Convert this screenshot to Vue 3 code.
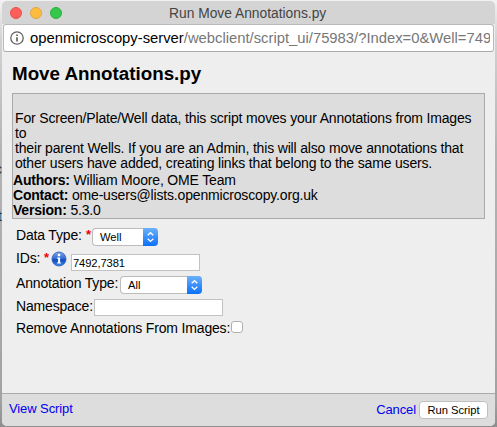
<script setup>
import { ref } from 'vue'

const dataType = ref('Well')
const ids = ref('7492,7381')
const annotationType = ref('All')
const namespace = ref('')
const removeAnns = ref(false)
</script>

<template>
  <div class="desktop">
    <span class="behind b1">c</span>
    <span class="behind b2">t</span>
    <div class="window">
      <header class="titlebar">
        <span class="lights"><i class="red"></i><i class="amber"></i><i class="green"></i></span>
        <span class="caption">Run Move Annotations.py</span>
      </header>
      <div class="address">
        <svg class="site" width="14" height="14" viewBox="0 0 14 14">
          <circle cx="7" cy="7" r="6.2" fill="none" stroke="#606060" stroke-width="1.3" />
          <path d="M7 6.2V10.4M7 3.4V5" stroke="#555" stroke-width="1.6" />
        </svg>
        <span class="url"><b>openmicroscopy-server</b>/webclient/script_ui/75983/?Index=0&amp;Well=749</span>
      </div>
      <main class="content">
        <h1>Move Annotations.py</h1>
        <section class="info">
          <p class="desc">For Screen/Plate/Well data, this script moves your Annotations from Images<br>to<br>their parent Wells. If you are an Admin, this will also move annotations that<br>other users have added, creating links that belong to the same users.</p>
          <p><b>Authors:</b> William Moore, OME Team</p>
          <p><b>Contact:</b> ome-users@lists.openmicroscopy.org.uk</p>
          <p><b>Version:</b> 5.3.0</p>
        </section>
        <form class="form" @submit.prevent>
          <div class="row r1">
            <label>Data Type:</label><span class="req">*</span>
            <div class="select well"><span>{{ dataType }}</span><em><svg width="15" height="18" viewBox="0 0 15 18"><path d="M4.7 7.3L7.5 4.7L10.3 7.3M4.7 10.8L7.5 13.4L10.3 10.8" /></svg></em></div>
          </div>
          <div class="row r2">
            <label>IDs:</label><span class="req">*</span>
            <svg class="help" width="16" height="16" viewBox="0 0 16 16">
              <defs>
                <linearGradient id="blue" x1="0" y1="0" x2="0" y2="1">
                  <stop offset="0" stop-color="#7fa9ea" /><stop offset=".48" stop-color="#2f68d0" />
                  <stop offset=".55" stop-color="#1149b7" /><stop offset="1" stop-color="#3c8be9" />
                </linearGradient>
              </defs>
              <circle cx="8" cy="8" r="7" fill="url(#blue)" stroke="#2a58b4" stroke-width=".8" />
              <circle cx="8" cy="4.1" r="1.3" fill="#fff" />
              <path d="M6.1 6.6H9.1V11.5H10.1V12.6H6V11.5H7.1V7.7H6.1Z" fill="#fff" />
            </svg>
            <input v-model="ids" class="text" type="text">
          </div>
          <div class="row r3">
            <label>Annotation Type:</label>
            <div class="select all"><span>{{ annotationType }}</span><em><svg width="15" height="18" viewBox="0 0 15 18"><path d="M4.7 7.3L7.5 4.7L10.3 7.3M4.7 10.8L7.5 13.4L10.3 10.8" /></svg></em></div>
          </div>
          <div class="row r4">
            <label>Namespace:</label>
            <input v-model="namespace" class="text" type="text">
          </div>
          <div class="row r5">
            <label>Remove Annotations From Images:</label>
            <input v-model="removeAnns" class="check" type="checkbox">
          </div>
        </form>
      </main>
      <footer class="footer">
        <a class="view">View Script</a>
        <a class="cancel">Cancel</a>
        <button type="button">Run Script</button>
      </footer>
    </div>
  </div>
</template>

<style>
body { margin: 0; }
</style>

<style scoped>
* { box-sizing: border-box; }
.desktop {
  position: relative;
  width: 497px;
  height: 427px;
  padding: 1px 2px 1px 2px;
  overflow: hidden;
  background: linear-gradient(#f2f2f2 0, #d2d2d2 40px, #b4b4b4 150px, #a2a2a2 400px, #8e8e8e 100%);
  font-family: "Liberation Sans", Arial, sans-serif;
  font-size: 14px;
  letter-spacing: -0.17px;
  color: #000;
  white-space: nowrap;
}
.behind { position: absolute; font-size: 14px; line-height: 16px; color: #333; }
.b1 { top: 161px; left: -5px; }
.b2 { top: 208px; left: -2px; }
.window {
  position: relative;
  display: flex;
  flex-direction: column;
  width: 493px;
  height: 425px;
  border-radius: 5px;
  overflow: hidden;
  background: #eee;
}
.titlebar {
  display: flex;
  align-items: center;
  flex: none;
  height: 23px;
  padding-left: 8px;
  background: #d4d4d4;
}
.lights { display: flex; gap: 8px; padding-top: 1px; }
.lights i { width: 12px; height: 12px; border-radius: 50%; border: 1px solid; }
.lights .red { background: #fe5f5b; border-color: #e9504c; }
.lights .amber { background: #fdbc40; border-color: #e3a53a; }
.lights .green { background: #34c84a; border-color: #2bb03c; }
.caption { margin-left: 107px; padding-top: 2px; font-size: 13.8px; letter-spacing: 0; line-height: 16px; color: #444; }
.address {
  display: flex;
  align-items: center;
  flex: none;
  height: 28px;
  margin: 0 1px;
  padding: 0 3px 0 6px;
  background: #fff;
  border: 1px solid #b9b9b9;
  border-bottom-color: #aaa;
  border-radius: 3px;
}
.site { flex: none; margin-right: 6px; }
.url { flex: 1; min-width: 0; overflow: hidden; font-size: 14.8px; letter-spacing: 0; line-height: 18px; color: #777; }
.url b { font-weight: normal; color: #000; }
.content { flex: 1; padding: 11px 10px 0; }
h1 { margin: 0 0 9px; font-size: 18.8px; letter-spacing: 0; line-height: 21px; }
.info {
  width: 473px;
  height: 126px;
  padding: 17px 0 0;
  background: #ddd;
  border: 1px solid #a9a9a9;
}
.info p { margin: 0; line-height: 15px; }
.info .desc { padding: 0 0 2px 2px; }
.info b { letter-spacing: -0.2px; }
.form { padding-left: 4px; }
.row { display: flex; align-items: flex-start; }
label { flex: none; margin-top: -1px; line-height: 16px; }
.req { flex: none; width: 5px; color: #f00000; font-weight: bold; line-height: 16px; font-size: 13px; }
.r1 { height: 23px; padding-top: 9px; }
.r1 label { width: 66px; }
.r1 .req { margin: -1px 1px 0 4px; }
.r2 { height: 24px; padding-top: 9px; }
.r2 label { width: 24px; }
.r2 .req { margin: -1px 3px 0 4px; }
.r3 { height: 24px; padding-top: 10px; }
.r3 label { width: 104px; }
.r4 { height: 22px; padding-top: 9px; }
.r4 label { width: 78px; }
.r5 { padding-top: 9px; }
.r5 label { width: 214px; }
.select {
  display: flex;
  justify-content: space-between;
  align-items: center;
  flex: none;
  height: 18px;
  padding-left: 7px;
  background: #fff;
  border: 1px solid #bcbcbc;
  border-right: 0;
  border-radius: 4px;
  font-size: 11.2px;
  letter-spacing: 0;
}
.select em { width: 15px; height: 18px; border-radius: 0 4px 4px 0; background: linear-gradient(#6bb1fa, #0b70fb); }
.select svg { display: block; }
.select path { fill: none; stroke: #fff; stroke-width: 1.4; }
.well { width: 66px; }
.all { width: 82px; }
.help { flex: none; margin: 0 0 0 -1px; }
.text {
  flex: none;
  width: 129px;
  height: 17px;
  margin: 0;
  padding: 0 1px;
  border: 1px solid #c2c2c2;
  border-radius: 0;
  background: #fff;
  font: 11.2px "Liberation Sans", Arial, sans-serif;
  letter-spacing: -0.1px;
  color: #000;
}
.r2 .text { margin: 3px 0 0 4px; }
.check {
  appearance: none;
  width: 12px;
  height: 12px;
  margin: 0 0 0 1px;
  border: 1px solid #b0b0b0;
  border-radius: 3px;
  background: #fff;
}
.footer {
  display: flex;
  align-items: flex-start;
  flex: none;
  height: 33px;
  padding: 7px 7px 0 7px;
  background: #ddd;
  border-top: 1px solid #aaa;
}
.footer a { font-size: 13px; letter-spacing: -0.1px; line-height: 16px; color: #0000f0; }
.footer .cancel { padding-top: 1px; }
.view { margin-right: auto; }
.footer button {
  width: 69px;
  height: 18px;
  margin: 0 0 0 3px;
  padding: 0;
  border: 1px solid #c0c0c0;
  border-radius: 4px;
  background: #fff;
  font: 11.2px "Liberation Sans", Arial, sans-serif;
  color: #000;
}
</style>
